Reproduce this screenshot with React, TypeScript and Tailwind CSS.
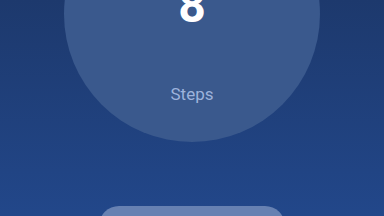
import React from "react";

export default function App() {
  return (
    <div
      className="w-[384px] h-[216px] overflow-hidden flex flex-col items-center bg-gradient-to-b from-[#1d396d] to-[#22478a]"
      style={{ fontFamily: "Roboto, 'Noto Sans', sans-serif" }}
    >
      <div className="mt-[-114px] w-[256px] h-[256px] shrink-0 rounded-full bg-[#3a598d] flex flex-col items-center pt-[96px]">
        <div className="text-[48px] leading-[48px] font-bold text-white">8</div>
        <div className="mt-[54px] text-[17px] leading-[20px] text-[#9db3dc]">Steps</div>
      </div>
      <button className="mt-[64px] w-[186px] h-[48px] shrink-0 rounded-[20px] bg-[#6781b2]" />
    </div>
  );
}
